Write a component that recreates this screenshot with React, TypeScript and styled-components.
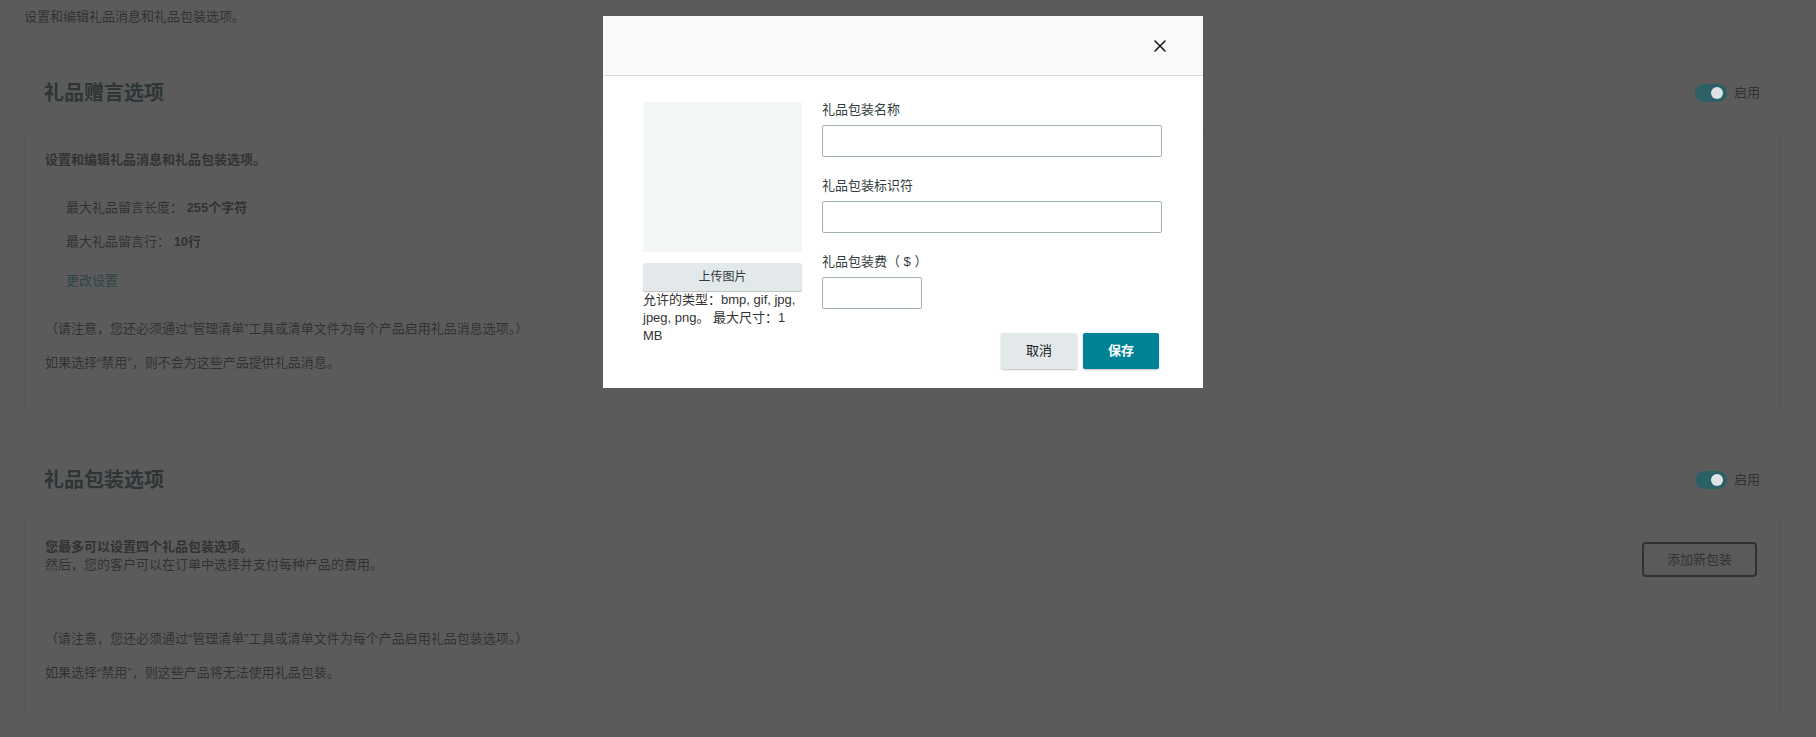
import styled, { createGlobalStyle } from "styled-components";

const GlobalStyle = createGlobalStyle`
  body {
    margin: 0;
    background: #ffffff;
    font-family: "Liberation Sans", "Noto Sans CJK SC", sans-serif;
    color: #16191f;
  }
`;

export default function App() {
  return (
    <>
      <GlobalStyle />
      <Page>
        <PageIntro>设置和编辑礼品消息和礼品包装选项。</PageIntro>

        <Section>
          <SectionHeader>
            <SectionTitle>礼品赠言选项</SectionTitle>
            <Toggle />
          </SectionHeader>
          <SectionBody $padBottom={36}>
            <BoldLead $divider>设置和编辑礼品消息和礼品包装选项。</BoldLead>
            <SettingsList>
              <SettingLine>
                最大礼品留言长度： <strong>255个字符</strong>
              </SettingLine>
              <SettingLine>
                最大礼品留言行： <strong>10行</strong>
              </SettingLine>
              <ChangeLink>更改设置</ChangeLink>
            </SettingsList>
            <Note $top={30}>
              （请注意，您还必须通过“管理清单”工具或清单文件为每个产品启用礼品消息选项。）
            </Note>
            <Note $top={16}>如果选择“禁用”，则不会为这些产品提供礼品消息。</Note>
          </SectionBody>
        </Section>

        <Section $gap={40}>
          <SectionHeader>
            <SectionTitle>礼品包装选项</SectionTitle>
            <Toggle />
          </SectionHeader>
          <SectionBody $padBottom={36}>
            <WrapRow>
              <div>
                <BoldLead>您最多可以设置四个礼品包装选项。</BoldLead>
                <Note $top={0}>然后，您的客户可以在订单中选择并支付每种产品的费用。</Note>
              </div>
              <OutlineButton>添加新包装</OutlineButton>
            </WrapRow>
            <Note $top={53}>
              （请注意，您还必须通过“管理清单”工具或清单文件为每个产品启用礼品包装选项。）
            </Note>
            <Note $top={16}>如果选择“禁用”，则这些产品将无法使用礼品包装。</Note>
          </SectionBody>
        </Section>
      </Page>

      <Overlay>
        <Modal>
          <ModalHeader>
            <CloseButton aria-label="关闭">
              <svg width="12" height="12" viewBox="0 0 12 12">
                <path
                  d="M1 1 L11 11 M11 1 L1 11"
                  stroke="#16191f"
                  strokeWidth="1.6"
                  strokeLinecap="round"
                />
              </svg>
            </CloseButton>
          </ModalHeader>
          <ModalBody>
            <ImageColumn>
              <ImagePreview />
              <UploadButton>上传图片</UploadButton>
              <Hint>允许的类型：bmp, gif, jpg, jpeg, png。 最大尺寸：1 MB</Hint>
            </ImageColumn>
            <FormColumn>
              <FieldLabel>礼品包装名称</FieldLabel>
              <TextInput />
              <FieldLabel $top={20}>礼品包装标识符</FieldLabel>
              <TextInput />
              <FieldLabel $top={20}>礼品包装费（ $ ）</FieldLabel>
              <TextInput $width={100} />
              <Actions>
                <SecondaryButton>取消</SecondaryButton>
                <PrimaryButton>保存</PrimaryButton>
              </Actions>
            </FormColumn>
          </ModalBody>
        </Modal>
      </Overlay>
    </>
  );
}

function Toggle() {
  return (
    <ToggleWrap>
      <Track>
        <Knob />
      </Track>
      <ToggleLabel>启用</ToggleLabel>
    </ToggleWrap>
  );
}

const Page = styled.main`
  padding: 8px 36px 40px 24px;
  font-size: 13px;
  line-height: 18px;
`;

const PageIntro = styled.div`
  color: #16191f;
`;

const Section = styled.section<{ $gap?: number }>`
  margin-top: ${({ $gap }) => $gap ?? 36}px;
`;

const SectionHeader = styled.div`
  height: 69px;
  box-sizing: border-box;
  padding: 0 20px 8px;
  display: flex;
  align-items: center;
  justify-content: space-between;
`;

const SectionTitle = styled.h2`
  margin: 0;
  font-size: 20px;
  line-height: 26px;
  font-weight: 700;
  color: #002f36;
`;

const ToggleWrap = styled.div`
  display: flex;
  align-items: center;
  gap: 7px;
`;

const Track = styled.div`
  position: relative;
  z-index: 20;
  width: 32px;
  height: 18px;
  border-radius: 9px;
  background: #2a6066;
  display: flex;
  align-items: center;
  justify-content: flex-end;
  padding: 0 4px;
  box-sizing: border-box;
`;

const Knob = styled.span`
  width: 12px;
  height: 12px;
  border-radius: 50%;
  background: #dfe3e3;
`;

const ToggleLabel = styled.span`
  font-size: 13px;
  color: #16191f;
`;

const SectionBody = styled.div<{ $padBottom: number }>`
  border: 1px solid #e3e6e6;
  padding: 19px 22px ${({ $padBottom }) => $padBottom}px 20px;
`;

const BoldLead = styled.div<{ $divider?: boolean }>`
  font-weight: 700;
  color: #16191f;
  ${({ $divider }) =>
    $divider &&
    `
    padding-bottom: 11px;
    border-bottom: 1px solid #f0f2f2;
  `}
`;

const SettingsList = styled.div`
  margin-top: 18px;
  padding-left: 21px;
  display: flex;
  flex-direction: column;
  gap: 16px;
`;

const SettingLine = styled.div`
  color: #16191f;

  strong {
    font-weight: 700;
  }
`;

const ChangeLink = styled.a`
  margin-top: 5px;
  color: #008296;
  cursor: pointer;
`;

const Note = styled.div<{ $top: number }>`
  margin-top: ${({ $top }) => $top}px;
  color: #16191f;
`;

const WrapRow = styled.div`
  display: flex;
  justify-content: space-between;
  align-items: flex-start;
`;

const OutlineButton = styled.button`
  margin-top: 4px;
  width: 115px;
  height: 35px;
  border: 2px solid #16191f;
  border-radius: 4px;
  background: #fafafa;
  font: inherit;
  font-size: 13px;
  color: #16191f;
`;

const Overlay = styled.div`
  position: fixed;
  inset: 0;
  z-index: 10;
  background: rgba(55, 55, 55, 0.82);
  display: flex;
  justify-content: center;
  align-items: flex-start;
  padding: 16px 10px 0 0;
`;

const Modal = styled.div`
  width: 600px;
  background: #ffffff;
  font-size: 13px;
  line-height: 18px;
`;

const ModalHeader = styled.div`
  height: 59px;
  background: #fafafa;
  border-bottom: 1px solid #d5dbdb;
  display: flex;
  align-items: center;
  justify-content: flex-end;
  padding-right: 31px;
`;

const CloseButton = styled.button`
  width: 24px;
  height: 24px;
  padding: 0;
  border: none;
  background: transparent;
  display: flex;
  align-items: center;
  justify-content: center;
`;

const ModalBody = styled.div`
  display: grid;
  grid-template-columns: 159px 340px;
  column-gap: 20px;
  padding: 25px 41px 19px 40px;
`;

const ImageColumn = styled.div`
  display: flex;
  flex-direction: column;
`;

const ImagePreview = styled.div`
  margin-top: 1px;
  height: 150px;
  background: #f4f7f7;
`;

const UploadButton = styled.button`
  margin-top: 11px;
  height: 28px;
  border: none;
  border-radius: 2px;
  background: #e3e9ea;
  box-shadow: 0 1px 1px rgba(0, 0, 0, 0.25);
  font: inherit;
  font-size: 12px;
  color: #33393a;
`;

const Hint = styled.div`
  margin-top: 0;
  color: #333333;
  font-size: 13px;
  line-height: 18px;
`;

const FormColumn = styled.div`
  display: flex;
  flex-direction: column;
  align-items: flex-start;
`;

const FieldLabel = styled.label<{ $top?: number }>`
  margin-top: ${({ $top }) => $top ?? 0}px;
  color: #333d3e;
`;

const TextInput = styled.input<{ $width?: number }>`
  margin-top: 6px;
  width: ${({ $width }) => ($width ? `${$width}px` : "100%")};
  height: 32px;
  box-sizing: border-box;
  border: 1px solid #a2b3b5;
  border-radius: 2px;
  background: #ffffff;
  font: inherit;
`;

const Actions = styled.div`
  align-self: stretch;
  margin-top: 24px;
  padding-right: 3px;
  display: flex;
  justify-content: flex-end;
  gap: 6px;
`;

const BaseButton = styled.button`
  width: 76px;
  height: 36px;
  border: none;
  border-radius: 2px;
  font: inherit;
  font-size: 13px;
  box-shadow: 0 1px 2px rgba(0, 0, 0, 0.25);
`;

const SecondaryButton = styled(BaseButton)`
  background: #e3e9ea;
  color: #16191f;
`;

const PrimaryButton = styled(BaseButton)`
  background: #008296;
  color: #ffffff;
  font-weight: 700;
`;
